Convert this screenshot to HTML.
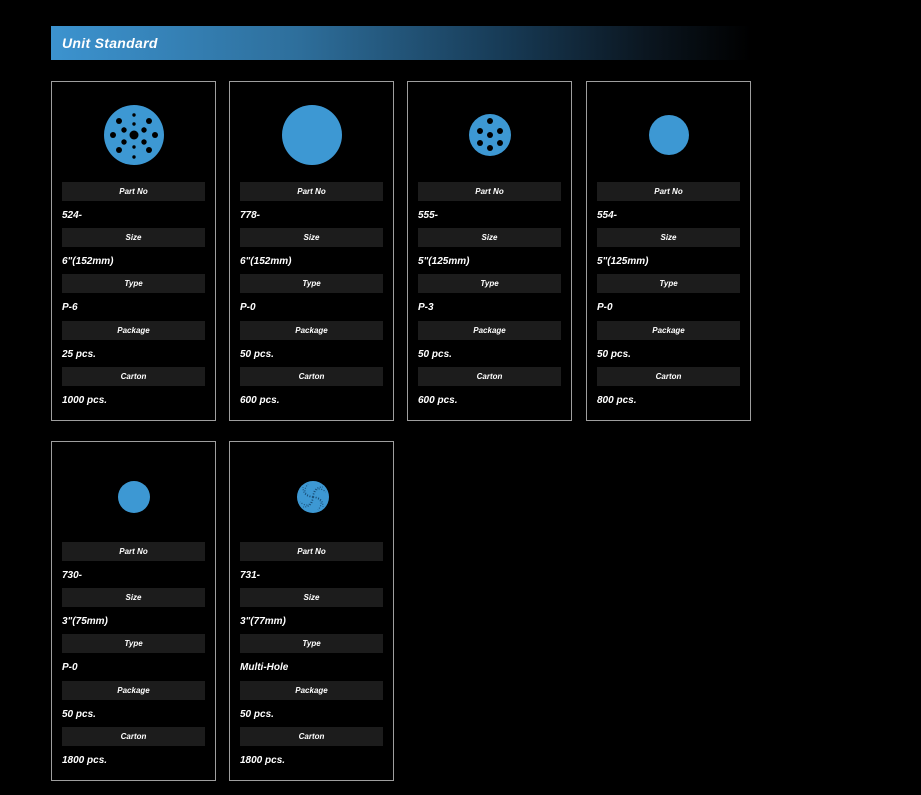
<!DOCTYPE html>
<html><head><meta charset="utf-8"><style>
html,body{margin:0;padding:0;background:#000;width:921px;height:795px;overflow:hidden;font-family:"Liberation Sans",sans-serif;}
.hdr{position:absolute;left:51px;top:26px;width:700px;height:34px;background:linear-gradient(90deg,#3c93cf 0%,#2e6f9c 35%,#173a55 65%,#0b1620 85%,#000 100%);}
.hdr span{position:absolute;left:11px;top:9px;color:#fff;font-size:14px;font-weight:bold;font-style:italic;letter-spacing:0.3px;}
.card{position:absolute;border:1px solid #9e9e9e;box-sizing:border-box;width:165px;height:340px;}
.bar{position:absolute;width:143px;height:19px;background:#1c1c1c;color:#fff;font-size:8px;font-weight:bold;font-style:italic;text-align:center;line-height:19px;}
.val{position:absolute;color:#fff;font-size:10px;font-weight:bold;font-style:italic;}
svg{position:absolute;left:0;top:0;}
</style></head><body>
<div class="hdr"><span>Unit Standard</span></div>

<div class="card" style="left:51px;top:81px">
<svg width="163" height="100"><circle cx="82" cy="53" r="30" fill="#3d98d3"/>
<g fill="#000"><circle cx="82" cy="53" r="4.5"/><circle cx="82" cy="42" r="1.7"/><circle cx="82" cy="65" r="1.7"/><circle cx="72" cy="48" r="2.7"/><circle cx="92" cy="48" r="2.7"/><circle cx="72" cy="60" r="2.7"/><circle cx="92" cy="60" r="2.7"/><circle cx="82" cy="33" r="1.7"/><circle cx="82" cy="75" r="1.7"/><circle cx="67" cy="39" r="3"/><circle cx="97" cy="39" r="3"/><circle cx="61" cy="53" r="3"/><circle cx="103" cy="53" r="3"/><circle cx="67" cy="68" r="3"/><circle cx="97" cy="68" r="3"/></g></svg>
</div>
<div class="card" style="left:229px;top:81px">
<svg width="163" height="100"><circle cx="82" cy="53" r="30" fill="#3d98d3"/></svg>
</div>
<div class="card" style="left:407px;top:81px">
<svg width="163" height="100"><circle cx="82" cy="53" r="21" fill="#3d98d3"/>
<g fill="#000"><circle cx="82" cy="53" r="3"/><circle cx="82" cy="39" r="3"/><circle cx="82" cy="66" r="3"/><circle cx="72" cy="49" r="3"/><circle cx="92" cy="49" r="3"/><circle cx="72" cy="61" r="3"/><circle cx="92" cy="61" r="3"/></g></svg>
</div>
<div class="card" style="left:586px;top:81px">
<svg width="163" height="100"><circle cx="82" cy="53" r="20" fill="#3d98d3"/></svg>
</div>
<div class="card" style="left:51px;top:441px">
<svg width="163" height="100"><circle cx="82" cy="55" r="16" fill="#3d98d3"/></svg>
</div>
<div class="card" style="left:229px;top:441px">
<svg width="163" height="100"><circle cx="83" cy="55" r="16" fill="#3d98d3"/>
<g fill="none" stroke="#1a4f78" stroke-width="1.2" stroke-dasharray="1 1.6">
<path d="M83 55 Q83 45 93 45"/><path d="M83 55 Q93 55 93 65"/><path d="M83 55 Q83 65 73 65"/><path d="M83 55 Q73 55 73 45"/>
<path d="M83 55 Q86 42 96 50"/><path d="M83 55 Q96 58 88 68"/><path d="M83 55 Q80 68 70 60"/><path d="M83 55 Q70 52 78 42"/></g></svg>
</div>

<div id="c"></div>
<script>
var d=[[51,81,"524-","6\"(152mm)","P-6","25 pcs.","1000 pcs."],[229,81,"778-","6\"(152mm)","P-0","50 pcs.","600 pcs."],[407,81,"555-","5\"(125mm)","P-3","50 pcs.","600 pcs."],[586,81,"554-","5\"(125mm)","P-0","50 pcs.","800 pcs."],[51,441,"730-","3\"(75mm)","P-0","50 pcs.","1800 pcs."],[229,441,"731-","3\"(77mm)","Multi-Hole","50 pcs.","1800 pcs."]];
var L=["Part No","Size","Type","Package","Carton"],bt=[101,147,193,240,286],vt=[129,175,221,268,314],h="";
d.forEach(function(r){for(var i=0;i<5;i++){h+='<div class="bar" style="left:'+(r[0]+11)+'px;top:'+(r[1]+bt[i])+'px">'+L[i]+'</div><div class="val" style="left:'+(r[0]+11)+'px;top:'+(r[1]+vt[i])+'px">'+r[2+i].replace(/"/g,'&quot;')+'</div>';}});
document.getElementById("c").innerHTML=h;
</script>
</body></html>
